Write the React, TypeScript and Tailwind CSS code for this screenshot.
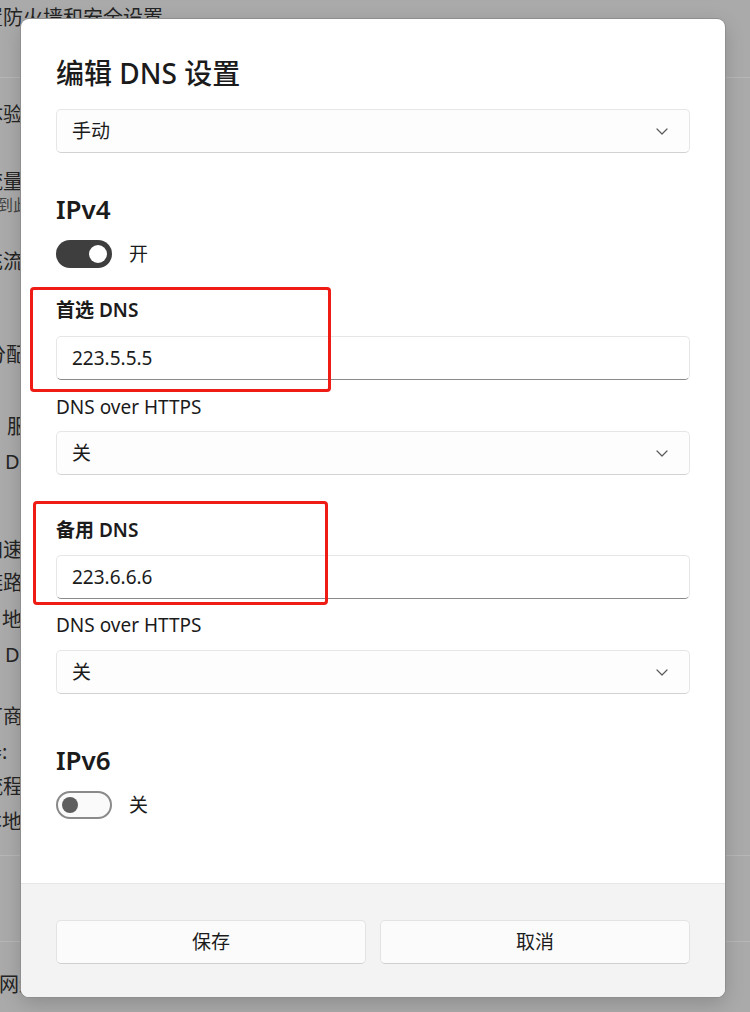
import React from "react";

const FONT = '"Noto Sans", "Noto Sans CJK SC", sans-serif';

type BgRow = { mt: number; h: number; text: string; ml: number; small?: boolean };

const bgRows: BgRow[] = [
  { mt: 22, h: 30, text: "体验", ml: -17 },
  { mt: 38, h: 28, text: "流量", ml: -17 },
  { mt: 0, h: 18, text: "到此", ml: -3, small: true },
  { mt: 33, h: 30, text: "充流", ml: -17 },
  { mt: 63, h: 30, text: "分配", ml: -14 },
  { mt: 42, h: 30, text: "服", ml: 7 },
  { mt: 5, h: 30, text: "DNS", ml: 5 },
  { mt: 58, h: 30, text: "加速", ml: -17 },
  { mt: 3, h: 30, text: "链路", ml: -17 },
  { mt: 7, h: 30, text: "地址", ml: 2 },
  { mt: 5, h: 30, text: "DNS", ml: 5 },
  { mt: 32, h: 30, text: "厂商", ml: -17 },
  { mt: 5, h: 30, text: "器:", ml: -18 },
  { mt: 5, h: 30, text: "流程", ml: -17 },
  { mt: 5, h: 30, text: "本地", ml: -18 },
];

function Chevron() {
  return (
    <svg width="12" height="7" viewBox="0 0 12 7" fill="none">
      <path d="M1 1L6 6L11 1" stroke="#5a5a5a" strokeWidth="1.2" strokeLinecap="round" strokeLinejoin="round" />
    </svg>
  );
}

function Select({ value }: { value: string }) {
  return (
    <div className="flex h-[44px] items-center justify-between rounded-[5px] border border-[#e6e6e6] border-b-[#d2d2d2] bg-[#fdfdfd] pl-[15px] pr-[21px] text-[19px] text-[#1b1b1b]">
      <span>{value}</span>
      <Chevron />
    </div>
  );
}

function TextInput({ value }: { value: string }) {
  return (
    <div className="flex h-[44px] items-center rounded-[5px] border border-[#e6e6e6] border-b-[#8a8a8a] bg-white pl-[15px] text-[19px] text-[#1b1b1b]">
      {value}
    </div>
  );
}

function Label({ children, bold, mt }: { children: React.ReactNode; bold?: boolean; mt: string }) {
  return (
    <div className={`${mt} h-[26px] text-[19px] leading-[26px] text-[#1b1b1b] ${bold ? "font-semibold" : ""}`}>
      {children}
    </div>
  );
}

export default function App() {
  return (
    <div className="relative h-[1012px] w-[750px] overflow-hidden bg-[#aaaaaa]" style={{ fontFamily: FONT }}>
      {/* background page */}
      <div className="flex flex-col text-[20px] text-[#242424]">
        <div className="flex h-[36px] items-center whitespace-nowrap">
          <span className="ml-[-17px]">置防火墙和安全设置</span>
        </div>
        <div className="mt-[41px] h-px w-full bg-[#b7b7b7]" />
        {bgRows.map((r, i) => (
          <div
            key={i}
            className={`flex items-center whitespace-nowrap ${r.small ? "text-[16px] text-[#444]" : ""}`}
            style={{ marginTop: r.mt, height: r.h }}
          >
            <span style={{ marginLeft: r.ml }}>{r.text}</span>
          </div>
        ))}
        <div className="mt-[18px] h-px w-full bg-[#b7b7b7]" />
        <div className="mt-[85px] h-px w-full bg-[#b7b7b7]" />
        <div className="mt-[28px] flex h-[30px] items-center whitespace-nowrap">
          <span className="ml-[-1px]">网络和共享</span>
        </div>
      </div>

      {/* dialog */}
      <div className="absolute left-[21px] top-[19px] flex h-[978px] w-[704px] flex-col overflow-hidden rounded-[8px] bg-white shadow-[0_0_0_1px_#8f8f8f,0_6px_20px_rgba(0,0,0,0.18)]">
        <div className="relative flex flex-1 flex-col px-[35px] pt-[36px]">
          <div className="h-[36px] text-[28px] font-medium leading-[36px] text-[#1b1b1b]">编辑 DNS 设置</div>
          <div className="mt-[18px]">
            <Select value="手动" />
          </div>

          <div className="mt-[39px] h-[34px] text-[26px] font-semibold leading-[34px] text-[#1b1b1b]">IPv4</div>
          <div className="mt-[14px] flex h-[28px] items-center">
            <div className="flex h-[28px] w-[56px] items-center justify-end rounded-full bg-[#3e3e3e] pr-[5px]">
              <div className="h-[18px] w-[18px] rounded-full bg-white" />
            </div>
            <span className="ml-[17px] text-[19px] text-[#1b1b1b]">开</span>
          </div>

          <Label bold mt="mt-[29px]">首选 DNS</Label>
          <div className="mt-[13px]">
            <TextInput value="223.5.5.5" />
          </div>
          <Label mt="mt-[14px]">DNS over HTTPS</Label>
          <div className="mt-[11px]">
            <Select value="关" />
          </div>

          <Label bold mt="mt-[42px]">备用 DNS</Label>
          <div className="mt-[12px]">
            <TextInput value="223.6.6.6" />
          </div>
          <Label mt="mt-[13px]">DNS over HTTPS</Label>
          <div className="mt-[12px]">
            <Select value="关" />
          </div>

          <div className="mt-[49px] h-[34px] text-[26px] font-semibold leading-[34px] text-[#1b1b1b]">IPv6</div>
          <div className="mt-[14px] flex h-[28px] items-center">
            <div className="flex h-[28px] w-[56px] items-center rounded-full border-2 border-[#8a8a8a] bg-[#fafafa] pl-[4px]">
              <div className="h-[16px] w-[16px] rounded-full bg-[#5e5e5e]" />
            </div>
            <span className="ml-[17px] text-[19px] text-[#1b1b1b]">关</span>
          </div>

          {/* annotation boxes */}
          <div className="absolute left-[9px] top-[268px] h-[105px] w-[301px] rounded-[4px] border-[3px] border-[#ee1c15]" />
          <div className="absolute left-[12px] top-[482px] h-[104px] w-[295px] rounded-[4px] border-[3px] border-[#ee1c15]" />
        </div>

        <div className="flex h-[114px] gap-[14px] border-t border-[#e6e6e6] bg-[#f3f3f3] px-[35px] pt-[36px]">
          <div className="flex h-[44px] flex-1 items-center justify-center rounded-[5px] border border-[#e3e3e3] border-b-[#d0d0d0] bg-[#fbfbfb] text-[19px] text-[#1b1b1b]">
            保存
          </div>
          <div className="flex h-[44px] flex-1 items-center justify-center rounded-[5px] border border-[#e3e3e3] border-b-[#d0d0d0] bg-[#fbfbfb] text-[19px] text-[#1b1b1b]">
            取消
          </div>
        </div>
      </div>
    </div>
  );
}
